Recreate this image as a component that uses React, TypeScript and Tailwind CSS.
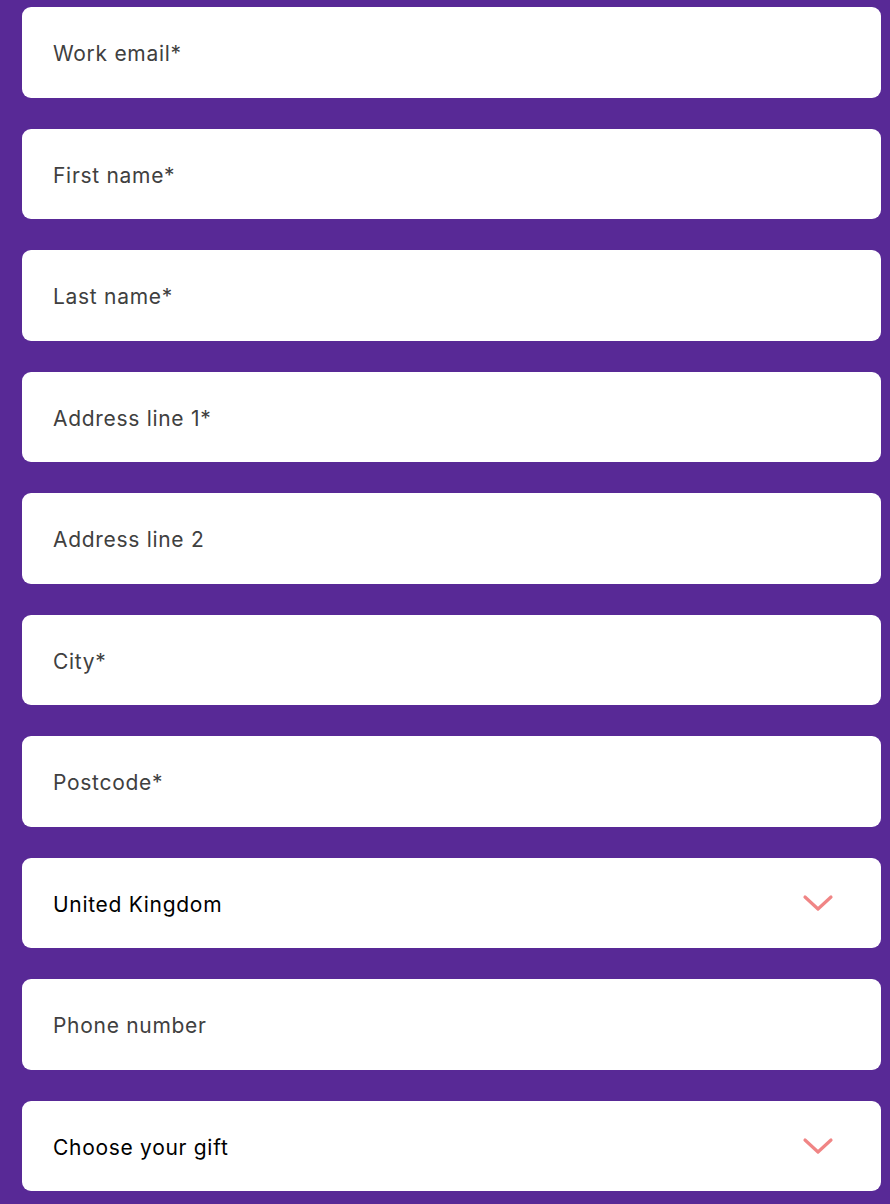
import React from "react";

const fields: { label: string; select?: boolean }[] = [
  { label: "Work email*" },
  { label: "First name*" },
  { label: "Last name*" },
  { label: "Address line 1*" },
  { label: "Address line 2" },
  { label: "City*" },
  { label: "Postcode*" },
  { label: "United Kingdom", select: true },
  { label: "Phone number" },
  { label: "Choose your gift", select: true },
];

function Chevron() {
  return (
    <svg width="32" height="20" viewBox="0 0 32 20" fill="none" className="shrink-0">
      <path d="M3 4 L16 16 L29 4" stroke="#f08585" strokeWidth="3.2" strokeLinecap="round" strokeLinejoin="round" />
    </svg>
  );
}

export default function App() {
  return (
    <div
      className="min-h-[1204px] w-[890px] bg-[#582996] pt-[7px] pb-[13px] pl-[22px] pr-[9px] flex flex-col gap-[31px]"
      style={{ fontFamily: "Inter, 'Noto Sans', sans-serif" }}
    >
      {fields.map((f) => (
        <div
          key={f.label}
          className="h-[90.5px] bg-white rounded-[9px] flex items-center justify-between pl-[31px] pr-[47px]"
        >
          <span
            className={`pt-[3px] text-[21px] tracking-[0.7px] ${f.select ? "text-black" : "text-[#404040]"}`}
          >
            {f.label}
          </span>
          {f.select && <Chevron />}
        </div>
      ))}
    </div>
  );
}
